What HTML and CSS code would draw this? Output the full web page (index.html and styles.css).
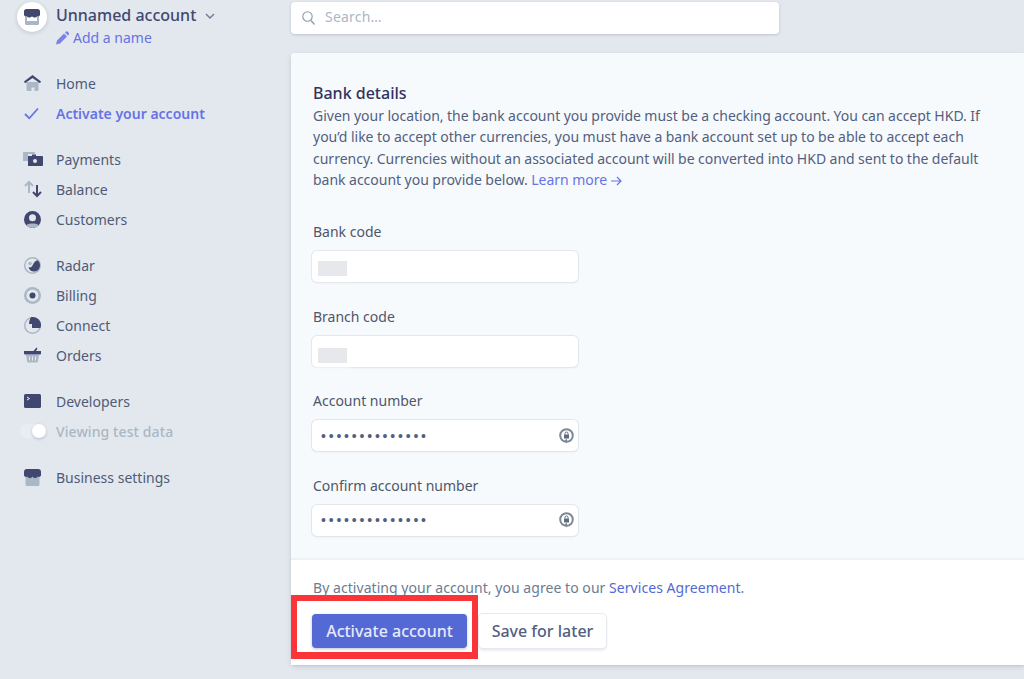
FILE: index.html
```html
<!DOCTYPE html>
<html lang="en">
<head>
<meta charset="utf-8">
<title>Activate your account</title>
<link rel="stylesheet" href="styles.css">
</head>
<body>
<div class="app">
  <aside class="sidebar">
    <div class="account">
      <div class="avatar">
        <svg width="18" height="18" viewBox="0 0 18 18"><path fill="#aab7c4" d="M2 7h14v8.500a1.500 1.500 0 0 1-1.500 1.500h-11A1.500 1.500 0 0 1 2 15.500z"/><path fill="#fff" d="M4 9h10v4H4z"/><path fill="#424770" d="M3.500 1h11A2.500 2.500 0 0 1 17 3.500V7a2 2 0 0 1-2.700.9 3 3 0 0 1-5.300 0 3 3 0 0 1-5.300 0A2 2 0 0 1 1 7V3.500A2.500 2.500 0 0 1 3.500 1z"/></svg>
      </div>
      <div class="account-text">
        <div class="account-name">Unnamed account
          <svg class="chev" width="10" height="6" viewBox="0 0 10 6"><path d="M1 1l4 4 4-4" fill="none" stroke="#6b7c93" stroke-width="1.400"/></svg>
        </div>
        <div class="add-name">
          <svg width="13" height="14" viewBox="0 0 13 13"><path fill="#7b82e8" d="M0 13l1-4 7-7 3 3-7 7zM9 1l1-1a1 1 0 0 1 1.400 0l1.600 1.600a1 1 0 0 1 0 1.400l-1 1z"/></svg>
          Add a name
        </div>
      </div>
    </div>
    <nav class="nav">
      <div class="group">
        <div class="row"><span class="ico"><svg width="17" height="16" viewBox="0 0 17 16"><path fill="#aab7c4" d="M2.500 7h12v7.500a1.500 1.500 0 0 1-1.500 1.500h-2.500v-3.500h-3V16H4a1.500 1.500 0 0 1-1.500-1.500z"/><path fill="#424770" d="M8.500 0L17 6.500l-1 1.800-7.500-5.300L1 8.300 0 6.500z"/></svg></span>Home</div>
        <div class="row active"><span class="ico"><svg width="15" height="13" viewBox="0 0 15 13"><path d="M1 7l4.300 4.300L14 1.500" fill="none" stroke="#6772e5" stroke-width="1.800"/></svg></span>Activate your account</div>
      </div>
      <div class="group">
        <div class="row"><span class="ico ico-wide"><svg width="20" height="14" viewBox="0 0 20 14"><path fill="#aab7c4" d="M1 0h10a1 1 0 0 1 1 1v1H5v7H0V1a1 1 0 0 1 1-1z"/><path fill="#424770" d="M5 4h4V2.500h4V4h6a1 1 0 0 1 1 1v8a1 1 0 0 1-1 1H5z"/><circle cx="12" cy="9" r="2" fill="#e3e8ee"/></svg></span>Payments</div>
        <div class="row"><span class="ico"><svg width="18" height="18" viewBox="0 0 18 18"><path d="M5 13V2M1 6l4-4 4 4" fill="none" stroke="#aab7c4" stroke-width="2"/><path d="M13 5v11M9 12l4 4 4-4" fill="none" stroke="#424770" stroke-width="2"/></svg></span>Balance</div>
        <div class="row"><span class="ico"><svg width="17" height="17" viewBox="0 0 17 17"><circle cx="8.500" cy="8.500" r="8.500" fill="#424770"/><path fill="#aab7c4" d="M2.300 14.300C4 12 13 12 14.700 14.300a8.500 8.500 0 0 1-12.400 0z"/><circle cx="8.500" cy="6.800" r="3.500" fill="#e3e8ee"/></svg></span>Customers</div>
      </div>
      <div class="group">
        <div class="row"><span class="ico"><svg width="17" height="17" viewBox="0 0 17 17"><circle cx="8.500" cy="8.500" r="8.500" fill="#aab7c4"/><circle cx="8.500" cy="8.500" r="7" fill="#e3e8ee"/><path fill="#424770" d="M14 3.500a6.500 6.500 0 0 1-3 11 6 6 0 0 1-6.500-4.500C6 11 8 10 9 7.500 10 5 12 3 14 3.500z"/><circle cx="6" cy="6.500" r="1.800" fill="#aab7c4"/></svg></span>Radar</div>
        <div class="row"><span class="ico"><svg width="17" height="17" viewBox="0 0 17 17"><circle cx="8.500" cy="8.500" r="8.500" fill="#aab7c4"/><circle cx="8.500" cy="8.500" r="6" fill="#e3e8ee"/><circle cx="8.500" cy="8.500" r="3" fill="#424770"/></svg></span>Billing</div>
        <div class="row"><span class="ico"><svg width="17" height="17" viewBox="0 0 17 17"><circle cx="8.500" cy="8.500" r="8.500" fill="#aab7c4"/><circle cx="8.500" cy="8.500" r="7" fill="#e3e8ee"/><path fill="#424770" d="M7 0h2a8 8 0 0 1 8 8.500c0 1-.3 1.800-.6 2.500H8V7H5C5 4 6 2 7 0z"/></svg></span>Connect</div>
        <div class="row"><span class="ico"><svg width="17" height="16" viewBox="0 0 17 16"><path fill="#aab7c4" d="M2 8h13l-1.200 6.700a1 1 0 0 1-1 .8H4.200a1 1 0 0 1-1-.8z"/><path fill="#e3e8ee" d="M5 9.500h1v4H5zM8 9.500h1v4H8zM11 9.500h1v4h-1z"/><path fill="#424770" d="M0 4h9.500l3-3.500 1 1L12 4h5v2.500a1 1 0 0 1-1 1H1a1 1 0 0 1-1-1z"/></svg></span>Orders</div>
      </div>
      <div class="group">
        <div class="row"><span class="ico"><svg width="17" height="14" viewBox="0 0 17 14"><rect width="17" height="14" rx="1.500" fill="#424770"/><path d="M3 3l2.500 1.500L3 6" fill="none" stroke="#fff" stroke-width=".9"/></svg></span>Developers</div>
        <div class="row muted"><span class="toggle"><span class="knob"></span></span>Viewing test data</div>
      </div>
      <div class="group">
        <div class="row"><span class="ico"><svg width="17" height="17" viewBox="0 0 17 17"><path fill="#aab7c4" d="M1.500 6h14v9.500a1.500 1.500 0 0 1-1.500 1.500H3a1.500 1.500 0 0 1-1.500-1.500z"/><path fill="#424770" d="M3 0h11a3 3 0 0 1 3 3v3.500a2 2 0 0 1-3.200.9 3 3 0 0 1-5.300 0 3 3 0 0 1-5.300 0A2 2 0 0 1 0 6.500V3a3 3 0 0 1 3-3z"/></svg></span>Business settings</div>
      </div>
    </nav>
  </aside>
  <main class="main">
    <div class="search">
      <svg width="13" height="14" viewBox="0 0 13 14"><circle cx="5.500" cy="5.500" r="4.700" fill="none" stroke="#8898aa" stroke-width="1.100"/><path d="M9 9.500l3.500 4" stroke="#8898aa" stroke-width="1.200"/></svg>
      <span>Search…</span>
    </div>
    <section class="card">
      <div class="card-body">
        <h2 class="title">Bank details</h2>
        <p class="desc">Given your location, the bank account you provide must be a checking account. You can accept HKD. If you’d like to accept other currencies, you must have a bank account set up to be able to accept each currency. Currencies without an associated account will be converted into HKD and sent to the default bank account you provide below. <a class="link">Learn more <svg class="arrow" width="11" height="10" viewBox="0 0 11 10"><path d="M0 5h10M6 1l4 4-4 4" fill="none" stroke="#6772e5" stroke-width="1.200"/></svg></a></p>
        <div class="field">
          <label>Bank code</label>
          <div class="input"><span class="blur blur-one"></span></div>
        </div>
        <div class="field">
          <label>Branch code</label>
          <div class="input"><span class="blur blur-two"></span></div>
        </div>
        <div class="field">
          <label>Account number</label>
          <div class="input"><span class="dots">••••••••••••••</span>
            <svg width="15" height="16" viewBox="0 0 15 16"><circle cx="7.500" cy="7.500" r="6.300" fill="none" stroke="#7d8896" stroke-width="2"/><rect x="5" y="6.500" width="5" height="4" fill="#5f6b7a"/><path d="M6 6.500V5.500a1.500 1.500 0 0 1 3 0v1" fill="none" stroke="#5f6b7a"/><path d="M5.500 12.500l2.500 3v-5z" fill="#7d8896"/></svg>
          </div>
        </div>
        <div class="field">
          <label>Confirm account number</label>
          <div class="input"><span class="dots">••••••••••••••</span>
            <svg width="15" height="16" viewBox="0 0 15 16"><circle cx="7.500" cy="7.500" r="6.300" fill="none" stroke="#7d8896" stroke-width="2"/><rect x="5" y="6.500" width="5" height="4" fill="#5f6b7a"/><path d="M6 6.500V5.500a1.500 1.500 0 0 1 3 0v1" fill="none" stroke="#5f6b7a"/><path d="M5.500 12.500l2.500 3v-5z" fill="#7d8896"/></svg>
          </div>
        </div>
      </div>
      <div class="card-foot">
        <p class="agree">By activating your account, you agree to our <a class="link link-dark">Services Agreement</a>.</p>
        <div class="actions">
          <button class="btn primary">Activate account</button>
          <button class="btn secondary">Save for later</button>
          <span class="highlight"></span>
        </div>
      </div>
    </section>
  </main>
</div>
</body>
</html>
```
FILE: styles.css
```css
* { box-sizing: border-box; }
html, body { margin: 0; height: 100%; overflow: hidden; }
body {
  background: #e3e8ee;
  color: #424770;
  font-family: "Noto Sans", "Open Sans", sans-serif;
  font-size: 14px;
}
.app { display: flex; height: 679px; }
.sidebar { width: 291px; flex: none; padding-left: 17px; }
.account { display: flex; gap: 9px; height: 68px; }
.avatar {
  width: 30px; height: 30px; margin-top: 2px; border-radius: 50%;
  background: #fff; display: flex; align-items: center; justify-content: center;
  box-shadow: 0 1px 4px rgba(50,50,93,.2);
}
.account-name { font-size: 16px; line-height: 30px; font-weight: 500; }
.chev { margin-left: 5px; vertical-align: 2px; }
.add-name { color: #6772e5; line-height: 16px; display: flex; align-items: center; gap: 4px; }
.nav { display: flex; flex-direction: column; gap: 16px; }
.row { height: 30px; display: flex; align-items: center; font-size: 14px; color: #4f5b76; }
.ico { width: 39px; flex: none; display: flex; align-items: center; padding-left: 7px; }
.ico-wide { padding-left: 6px; }
.active { color: #6772e5; font-weight: 600; }
.muted { color: #aab7c4; font-weight: 500; letter-spacing: .1px; }
.toggle { width: 39px; flex: none; height: 14px; display: block; position: relative; }
.toggle::before {
  content: ""; position: absolute; left: 3px; top: 0; width: 24px; height: 14px;
  border-radius: 7px; background: #e9edf2;
}
.knob {
  position: absolute; left: 15px; top: 0; width: 14px; height: 14px; border-radius: 50%;
  background: #fff; box-shadow: 0 1px 3px rgba(50,50,93,.25);
}
.main { flex: 1; min-width: 0; padding-top: 2px; }
.search {
  width: 488px; height: 32px; background: #fff; border-radius: 4px;
  box-shadow: 0 1px 3px rgba(50,50,93,.2);
  display: flex; align-items: center; gap: 10px; padding-left: 11px;
  color: #aab7c4; font-size: 14px; margin-bottom: 19px;
}
.search span { margin-bottom: 3px; letter-spacing: .2px; }
.card {
  height: 612px; background: #fff; border-radius: 4px 0 0 4px;
  box-shadow: 0 2px 5px rgba(50,50,93,.12), 0 1px 2px rgba(0,0,0,.08);
  display: flex; flex-direction: column;
}
.card-body {
  height: 507px; background: #f7fafc; padding: 29px 22px 0;
  border-bottom: 2px solid #eef1f5; border-radius: 4px 0 0 0;
}
.title { margin: 0; font-size: 16px; font-weight: 500; line-height: 23px; color: #32325d; }
.desc { margin: 0 0 31.400px; line-height: 21.400px; color: #525f7f; font-size: 14px; width: 690px; word-spacing: -.2px; }
.link { color: #6772e5; }
.link-dark { color: #5469d4; }
.arrow { vertical-align: -1px; }
.field { margin-bottom: 24.670px; }
.field label { display: block; line-height: 20px; color: #4f566b; margin-bottom: 9px; }
.input {
  width: 266px; height: 31px; margin-left: -1px; background: #fff; border-radius: 5px;
  box-shadow: 0 0 0 1px #e3e6ec, 0 1px 2px rgba(50,50,93,.1);
  display: flex; align-items: center; justify-content: space-between; padding: 0 4px 0 9px;
}
.blur {
  width: 29px; height: 15px; margin-left: -3px; background: #e6e8ec;
  box-shadow: 0 0 4px 4px #fff;
}
.blur-one { margin-top: 4px; }
.blur-two { margin-top: 9px; }
.dots { font-family: "Liberation Sans", sans-serif; font-size: 14px; letter-spacing: 2.800px; color: #525f7f; }
.card-foot { flex: 1; background: #fff; padding: 18px 22px 0; }
.agree { margin: 0 0 16px; line-height: 20px; color: #6b7c93; font-size: 14px; letter-spacing: .05px; }
.actions { display: flex; gap: 12px; position: relative; margin-left: -1px; }
.btn {
  height: 34px; border: 0; border-radius: 4px; background: #fff; color: #525f7f;
  font: 500 16px "Noto Sans", sans-serif; padding: 0;
}
.btn.primary { width: 155px; background: #5469d4; color: #e6e9fb; box-shadow: 0 1px 3px rgba(50,50,93,.3); }
.btn.secondary { width: 127px; box-shadow: 0 0 0 1px #e6e9ef, 0 2px 3px rgba(50,50,93,.15); }
.highlight {
  position: absolute; left: -21px; top: -19px; width: 187px; height: 64px;
  border: solid #f9353a; border-width: 6px 6px 7px;
  pointer-events: none;
}
```
